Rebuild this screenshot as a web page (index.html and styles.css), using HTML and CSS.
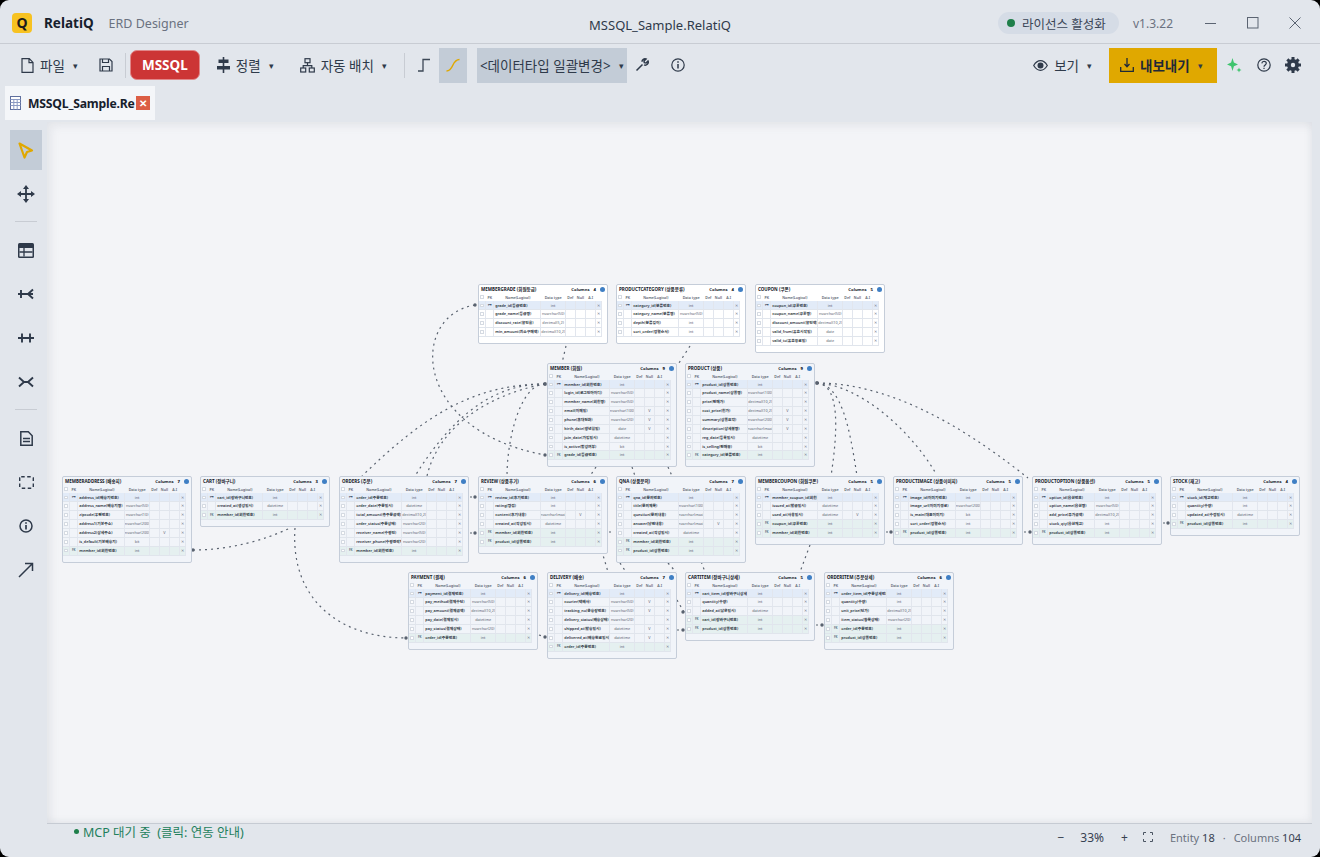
FILE: index.html
```html
<!DOCTYPE html>
<html lang="ko">
<head>
    <meta charset="UTF-8">
    <title>MSSQL_Sample.RelatiQ</title>
    <link rel="stylesheet" href="styles.css">
</head>
<body>
<div class="window">
    <header class="titlebar">
        <div class="logo">Q</div>
        <span class="app-name">RelatiQ</span>
        <span class="app-sub">ERD Designer</span>
        <span class="doc-title">MSSQL_Sample.RelatiQ</span>
        <div class="license"><i class="dot"></i>라이선스 활성화</div>
        <span class="version">v1.3.22</span>
        <div class="win-controls">
            <svg width="12" height="12" viewBox="0 0 12 12"><path d="M0 6.5h11" stroke="#5b6472" fill="none"/></svg>
            <svg width="12" height="12" viewBox="0 0 12 12"><rect x=".5" y=".5" width="10.5" height="10.5" stroke="#5b6472" fill="none"/></svg>
            <svg width="12" height="12" viewBox="0 0 12 12"><path d="M.5.5l11 11M11.5.5l-11 11" stroke="#5b6472" fill="none"/></svg>
        </div>
    </header>

    <nav class="toolbar">
        <button class="tool file-btn">
            <svg width="13" height="15" viewBox="0 0 13 15" class="ic"><path d="M1 .7h7.3L12 4.4v9.9H1zM8 .7v4h4"/></svg>
            파일 <b class="caret">▾</b>
        </button>
        <button class="tool save-btn">
            <svg width="14" height="14" viewBox="0 0 14 14" class="ic"><path d="M1 1h9.5L13 3.500V13H1zM3.500 1v3.500h6V1M3.500 13V8.500h7V13"/></svg>
        </button>
        <i class="tb-sep sep-db"></i>
        <button class="db-btn">MSSQL</button>
        <button class="tool align-btn">
            <svg width="13" height="16" viewBox="0 0 13 16"><path d="M6.500 0v16" stroke="#2f3a4a" stroke-width="1.600"/><rect x="1.500" y="2.500" width="10" height="3.500" fill="#2f3a4a"/><rect y="9" width="13" height="3.500" fill="#2f3a4a"/></svg>
            정렬 <b class="caret">▾</b>
        </button>
        <button class="tool layout-btn">
            <svg width="15" height="15" viewBox="0 0 15 15" class="ic"><rect x="5" y=".7" width="5" height="4"/><rect x=".7" y="10" width="5" height="4"/><rect x="9.300" y="10" width="5" height="4"/><path d="M7.500 4.700v3M3.200 10V7.700h8.600V10"/></svg>
            자동 배치 <b class="caret">▾</b>
        </button>
        <i class="tb-sep sep-line"></i>
        <button class="icon-btn ortho-btn">
            <svg width="14" height="14" viewBox="0 0 14 14"><path d="M1 13h5V1.500h7" fill="none" stroke="#3d4856" stroke-width="1.300"/></svg>
        </button>
        <button class="icon-btn curve-btn">
            <svg width="14" height="14" viewBox="0 0 14 14"><path d="M.5 13C8 13 5.500 1.500 13.500 1.500" fill="none" stroke="#e0a800" stroke-width="1.300"/></svg>
        </button>
        <div class="type-select">&lt;데이터타입 일괄변경&gt;<b class="caret">▾</b></div>
        <button class="icon-btn wrench-btn">
            <svg width="14" height="14" viewBox="0 0 14 14"><path d="M1.500 12.500l6-6M7 3.800A3 3 0 0 1 11 1l-2 2 .3 1.700 1.700.3 2-2a3 3 0 0 1-4 3.900" fill="none" stroke="#2f3a4a" stroke-width="1.500"/></svg>
        </button>
        <button class="icon-btn info-btn">
            <svg width="14" height="14" viewBox="0 0 14 14" class="ic"><circle cx="7" cy="7" r="6.200"/><path d="M7 6v4.500M7 3.300v1.400" stroke-width="1.500"/></svg>
        </button>
        <button class="tool view-btn">
            <svg width="15" height="11" viewBox="0 0 15 11" class="ic"><path d="M.7 5.500C3 1.700 5.200.7 7.500.7s4.500 1 6.800 4.800C12 9.300 9.800 10.300 7.500 10.300S3 9.300.7 5.500z"/><circle cx="7.500" cy="5.500" r="2.400" fill="#2f3a4a"/></svg>
            보기 <b class="caret">▾</b>
        </button>
        <button class="export-btn">
            <svg width="14" height="14" viewBox="0 0 14 14" fill="none" stroke="#1f2937" stroke-width="1.300"><path d="M7 0v8.500M4.500 6L7 8.800 9.500 6M.7 9v4.300h12.600V9"/></svg>
            내보내기 <b class="caret">▾</b>
        </button>
        <button class="icon-btn spark-btn">
            <svg width="15" height="15" viewBox="0 0 15 15" fill="#3ec46d"><path d="M5.500 0l1.400 4.600L11 6.500 6.900 8.300 5.500 13 4.100 8.300 0 6.500l4.100-1.900zM12 9.500l.7 1.800 1.800.7-1.800.7L12 14.500l-.7-1.800-1.800-.7 1.800-.7z"/></svg>
        </button>
        <button class="icon-btn help-btn">
            <svg width="14" height="14" viewBox="0 0 14 14" class="ic"><circle cx="7" cy="7" r="6.200"/><path d="M4.800 5.300C5 3.800 6 3.300 7 3.300c1.300 0 2.300.8 2.300 2 0 1.700-2.300 1.700-2.300 3.500M7 9.800v1.300"/></svg>
        </button>
        <button class="icon-btn gear-btn">
            <svg width="16" height="16" viewBox="0 0 16 16"><circle cx="8" cy="8" r="4.700" fill="none" stroke="#2f3a4a" stroke-width="2.600"/><g fill="#2f3a4a"><rect x="6.500" y="0" width="3" height="16"/><rect x="6.500" y="0" width="3" height="16" transform="rotate(45 8 8)"/><rect x="6.500" y="0" width="3" height="16" transform="rotate(90 8 8)"/><rect x="6.500" y="0" width="3" height="16" transform="rotate(135 8 8)"/></g><circle cx="8" cy="8" r="4" fill="#2f3a4a"/><circle cx="8" cy="8" r="2.200" fill="#e2e6ec"/></svg>
        </button>
    </nav>

    <div class="tabbar">
        <div class="tab">
            <svg width="11" height="14" viewBox="0 0 11 14"><rect x=".5" y=".5" width="10" height="13" fill="#fff" stroke="#5f6f9e"/><path d="M.5 3.500h10M.5 6.500h10M.5 9.500h10M3.800 3.500v10M7.200 3.500v10" stroke="#8c9bc4" fill="none"/></svg>
            <span class="tab-name">MSSQL_Sample.Re</span>
            <span class="tab-close">✕</span>
        </div>
    </div>

    <div class="workspace">
        <aside class="sidebar">
            <button class="side-btn active">
                <svg width="16" height="17" viewBox="0 0 16 17"><path d="M1.500 1.500l12.500 7-5 1.500L6.500 15.500z" fill="none" stroke="#e0a800" stroke-width="2.200" stroke-linejoin="round"/></svg>
            </button>
            <button class="side-btn">
                <svg width="18" height="18" viewBox="0 0 18 18" fill="#2f3a4a"><path d="M9 0l3 4H6zM9 18l-3-4h6zM0 9l4-3v6zM18 9l-4 3V6z"/><path d="M9 3v12M3 9h12" stroke="#2f3a4a" stroke-width="1.800"/></svg>
            </button>
            <i class="side-sep"></i>
            <button class="side-btn">
                <svg width="16" height="15" viewBox="0 0 16 15"><rect width="16" height="15" rx="1.500" fill="#2f3a4a"/><path d="M1.500 5h13v8.500h-13z" fill="#e2e6ec"/><path d="M1.500 9h13M6 5v8.500" stroke="#2f3a4a" stroke-width="1.300"/></svg>
            </button>
            <button class="side-btn">
                <svg width="16" height="12" viewBox="0 0 16 12" class="ic2"><path d="M0 6h15M3 2v8M15 1.500L10 6l5 4.500"/></svg>
            </button>
            <button class="side-btn">
                <svg width="16" height="12" viewBox="0 0 16 12" class="ic2"><path d="M0 6h16M4 1.500v9M12 1.500v9"/></svg>
            </button>
            <button class="side-btn">
                <svg width="16" height="12" viewBox="0 0 16 12" class="ic2"><path d="M1 1.500L6 6 1 10.500M15 1.500L10 6l5 4.500M5 6h6"/></svg>
            </button>
            <i class="side-sep"></i>
            <button class="side-btn">
                <svg width="13" height="15" viewBox="0 0 13 15" class="ic2 thin"><path d="M.8.800h7.500l3.900 3.900v9.500H.8zM3 7.500h7M3 10.500h7"/></svg>
            </button>
            <button class="side-btn">
                <svg width="15" height="13" viewBox="0 0 15 13"><rect x=".7" y=".7" width="13.600" height="11.600" rx="1.500" fill="none" stroke="#2f3a4a" stroke-width="1.400" stroke-dasharray="3.500 2.500"/></svg>
            </button>
            <button class="side-btn">
                <svg width="14" height="14" viewBox="0 0 14 14" class="ic2 thin"><circle cx="7" cy="7" r="6"/><path d="M7 6v4.500M7 3.200v1.500" stroke-width="1.700"/></svg>
            </button>
            <button class="side-btn">
                <svg width="16" height="16" viewBox="0 0 16 16" class="ic2 thin"><path d="M1 15L14.500 1.500M7 1.500h7.500V9"/></svg>
            </button>
        </aside>

        <main class="canvas" id="canvas">
            <svg class="links" viewBox="47 122 1265 701">
                <g class="link-lines">
                    <path d="M475 305C410 315 410 430 545 455"/>
                    <path d="M545 384C470 384 420 420 362 476"/>
                    <path d="M545 384C490 384 450 420 415 476"/>
                    <path d="M545 384C500 392 440 420 427 476"/>
                    <path d="M545 384C520 384 507 440 507 476"/>
                    <path d="M193 550C230 550 265 540 290 528"/>
                    <path d="M295 528C290 600 340 638 407 638"/>
                    <path d="M817 383C840 385 838 430 831 476"/>
                    <path d="M817 383C842 385 850 430 857 476"/>
                    <path d="M817 383C860 385 910 430 935 472"/>
                    <path d="M817 383C900 383 980 440 1028 478"/>
                    <path d="M566 346L562 363"/>
                    <path d="M690 346L679 363"/>
                    <path d="M596 467L590 476"/>
                    <path d="M632 467L635 476"/>
                    <path d="M668 467L672 476"/>
                    <path d="M600 545L608 572"/>
                    <path d="M620 563L626 572"/>
                    <path d="M668 563L676 572"/>
                    <path d="M695 545L705 572"/>
                    <path d="M810 545L800 572"/>
                    <path d="M470 497L476 497"/>
                    <path d="M470 533L476 533"/>
                    <path d="M609 532L615 532"/>
                    <path d="M539 635L546 637"/>
                    <path d="M677 630L684 630"/>
                    <path d="M677 600L684 612"/>
                    <path d="M816 625L823 625"/>
                    <path d="M886 532L892 532"/>
                    <path d="M1024 532L1031 532"/>
                    <path d="M1163 523L1169 523"/>
                </g>
                <g class="link-ends">
                    <circle cx="475" cy="305" r="1.700"/>
                    <circle cx="545" cy="384" r="1.900"/>
                    <circle cx="545" cy="455" r="1.700"/>
                    <circle cx="193" cy="550" r="1.700"/>
                    <circle cx="406" cy="638" r="1.700"/>
                    <circle cx="817" cy="383" r="1.900"/>
                    <circle cx="475" cy="497" r="1.700"/>
                    <circle cx="475" cy="533" r="1.700"/>
                    <circle cx="545" cy="637" r="1.700"/>
                    <circle cx="683" cy="630" r="1.700"/>
                    <circle cx="683" cy="612" r="1.700"/>
                    <circle cx="822" cy="625" r="1.700"/>
                    <circle cx="891" cy="532" r="1.700"/>
                    <circle cx="1030" cy="532" r="1.700"/>
                    <circle cx="1168" cy="523" r="1.700"/>
                </g>
            </svg>
        </main>
    </div>

    <footer class="statusbar">
        <span class="mcp"><i class="mcp-dot"></i>MCP 대기 중&nbsp; (클릭: 연동 안내)</span>
        <div class="status-right">
            <span class="zoom-minus">−</span>
            <span class="zoom-val">33%</span>
            <span class="zoom-plus">+</span>
            <svg width="10" height="10" viewBox="0 0 10 10" class="fit"><path d="M.5 3V.5H3M7 .5h2.500V3M9.500 7v2.500H7M3 9.500H.5V7" fill="none" stroke="#4b5563"/></svg>
            <span class="stat">Entity <em>18</em></span>
            <span class="stat-dot">·</span>
            <span class="stat">Columns <em>104</em></span>
        </div>
    </footer>
</div>
<script src="app.js"></script>
</body>
</html>
```

FILE: styles.css
```css
* {
  margin: 0;
  padding: 0;
  box-sizing: border-box;
}

html, body {
  height: 100%;
  overflow: hidden;
  background-color: black;
}

body {
  font-family: "Noto Sans", "Noto Sans CJK KR", sans-serif;
  color: #2f3a4a;
}

button {
  border: none;
  background: none;
  font: inherit;
  color: inherit;
}

.window {
  display: flex;
  flex-direction: column;
  height: 857px;
  background-color: #e2e6ec;
  border-radius: 9px;
  overflow: hidden;
}

/* Title bar */
.titlebar {
  position: relative;
  display: flex;
  align-items: center;
  height: 44px;
  padding: 3px 0 0 12px;
  border-bottom: 1px solid #c8ccd3;
  flex: none;
}

.logo {
  width: 20px;
  height: 20px;
  border-radius: 4px;
  background-color: #f7c221;
  color: #1b1b1b;
  font-weight: 700;
  font-size: 14px;
  line-height: 20px;
  text-align: center;
}

.app-name {
  margin-left: 12px;
  font-size: 13.500px;
  font-weight: 700;
  color: #17202c;
}

.app-sub {
  margin-left: 15px;
  font-size: 12.500px;
  color: #6b7280;
}

.doc-title {
  position: absolute;
  left: 0;
  right: 0;
  top: 16px;
  text-align: center;
  font-size: 13px;
  line-height: 18px;
  color: #2f3a4a;
}

.license {
  display: flex;
  align-items: center;
  gap: 7px;
  margin-left: auto;
  height: 22px;
  padding: 0 9px;
  width: 121px;
  border-radius: 11px;
  background-color: #d5dce6;
  font-size: 12.500px;
  white-space: nowrap;
  color: #3a4556;
}

.dot {
  width: 8px;
  height: 8px;
  border-radius: 50%;
  background-color: #1e7f4a;
}

.version {
  margin-left: 14px;
  font-size: 12px;
  color: #6b7280;
}

.win-controls {
  display: flex;
  gap: 30px;
  margin-left: 32px;
  margin-right: 19px;
}

/* Toolbar */
.toolbar {
  display: flex;
  align-items: center;
  height: 42px;
  flex: none;
  font-size: 13.500px;
}

.ic, .ic2 {
  fill: none;
  stroke: #2f3a4a;
  stroke-width: 1.200;
}

.ic2 {
  stroke-width: 1.900;
}

.ic2.thin {
  stroke-width: 1.500;
}

.tool {
  display: flex;
  align-items: center;
  gap: 6px;
  white-space: nowrap;
}

.caret {
  font-size: 9px;
  font-weight: 400;
  margin-left: 2px;
  color: #2f3a4a;
}

.file-btn { margin-left: 21px; }
.save-btn { margin-left: 21px; }
.align-btn { margin-left: 17px; }
.layout-btn { margin-left: 26px; gap: 6px; }
.view-btn { margin-left: auto; }

.tb-sep {
  width: 1px;
  height: 25px;
  background-color: #c8ccd3;
}

.sep-db { margin-left: 12px; }
.sep-line { margin-left: 17px; }

.db-btn {
  width: 70px;
  height: 30px;
  margin-left: 4px;
  border-radius: 7px;
  background-color: #cc3535;
  border: 1px solid #e0888a;
  color: white;
  font-size: 13.500px;
  font-weight: 700;
}

.icon-btn {
  display: flex;
  align-items: center;
  justify-content: center;
  width: 28px;
  height: 35px;
}

.ortho-btn { margin-left: 5px; }
.curve-btn { margin-left: 1px; background-color: #c3ccd7; }
.wrench-btn { margin-left: 1px; }
.info-btn { margin-left: 8px; }

.type-select {
  display: flex;
  align-items: center;
  justify-content: space-between;
  width: 150px;
  height: 35px;
  margin-left: 10px;
  padding: 0 3px 0 3px;
  background-color: #c3ccd7;
  font-size: 13.500px;
  white-space: nowrap;
}

.export-btn {
  display: flex;
  align-items: center;
  gap: 6px;
  width: 108px;
  height: 35px;
  margin-left: 17px;
  padding-left: 11px;
  background-color: #e0a800;
  color: #1f2937;
  font-weight: 700;
  font-size: 13.500px;
  white-space: nowrap;
}

.spark-btn { margin-left: 3px; }
.help-btn { margin-left: 2px; }
.gear-btn { margin-left: 1px; margin-right: 13px; }

/* Tabs */
.tabbar {
  height: 36px;
  flex: none;
  padding-left: 5px;
}

.tab {
  display: flex;
  align-items: center;
  width: 150px;
  height: 34px;
  padding-left: 5px;
  background-color: #f4f6f9;
}

.tab-name {
  margin-left: 7px;
  font-size: 12.200px;
  font-weight: 700;
  letter-spacing: -0.2px;
  color: #17202c;
  white-space: nowrap;
}

.tab-close {
  width: 14px;
  height: 14px;
  margin-left: auto;
  margin-right: 5px;
  background-color: #dc5e45;
  color: white;
  font-size: 10px;
  font-weight: 700;
  line-height: 14px;
  text-align: center;
}

/* Side tools + canvas */
.workspace {
  display: flex;
  flex: 1;
  min-height: 0;
  padding-right: 8px;
}

.sidebar {
  display: flex;
  flex-direction: column;
  align-items: center;
  width: 47px;
  padding: 8px 0 0 5px;
  flex: none;
}

.side-btn {
  display: flex;
  align-items: center;
  justify-content: center;
  width: 32px;
  height: 40px;
  margin-bottom: 4px;
  flex: none;
}

.side-btn.active {
  background-color: #c3ccd7;
}

.side-sep {
  width: 22px;
  height: 1px;
  margin: 3px 0 8px;
  background-color: #c8ccd3;
  flex: none;
}

.canvas {
  position: relative;
  flex: 1;
  background-color: #f3f4f7;
  box-shadow: inset 4px 4px 8px rgba(120, 130, 145, 0.12), inset -3px -3px 6px rgba(120, 130, 145, 0.08);
  overflow: hidden;
}

.links {
  position: absolute;
  left: 0;
  top: 0;
  width: 100%;
  height: 100%;
}

.link-lines path {
  fill: none;
  stroke: #59626f;
  stroke-width: 1.200;
  stroke-dasharray: 2 4;
}

.link-ends circle {
  fill: #59626f;
}

/* Entity cards, drawn at 33% */
.entity {
  position: absolute;
  width: 130px;
  padding-bottom: 6px;
  background-color: #f1f4f9;
  border: 1px solid #c5cdd9;
  border-radius: 2px;
  line-height: 1;
}

.entity.plain {
  background-color: white;
}

.entity-head {
  display: flex;
  align-items: center;
  height: 9.300px;
  padding: 0 2px 0 2px;
}

.entity-title {
  flex: 1;
  font-size: 4.500px;
  font-weight: 700;
  color: #14181f;
  white-space: nowrap;
}

.entity-count {
  font-size: 4.200px;
  font-weight: 700;
  color: #14181f;
  white-space: nowrap;
}

.entity-count b {
  margin-left: 4px;
  margin-right: 4px;
}

.entity-info {
  width: 5px;
  height: 5px;
  border-radius: 50%;
  background-color: #3f7fc4;
}

.col-row {
  display: grid;
  grid-template-columns: 7.300px 8px 47px 24.700px 9.800px 10.200px 10.300px 5.400px;
  width: 122.700px;
  height: 8.870px;
  align-items: stretch;
  font-size: 3.800px;
  color: #5b6472;
}

.col-head {
  height: 7.200px;
  font-size: 3.600px;
  font-weight: 600;
  color: #5b6472;
}

.col-row > span {
  display: flex;
  align-items: center;
  justify-content: center;
  border-bottom: 0.5px solid #e0e5ec;
  border-right: 0.5px solid #e2e6ee;
  white-space: nowrap;
  overflow: hidden;
}

.col-head > span {
  border-color: transparent;
}

.col-row > .cell-name {
  justify-content: flex-start;
  padding-left: 1px;
  font-weight: 600;
  color: #2b3340;
}

.col-head > .cell-name {
  justify-content: center;
  color: #5b6472;
}

.is-pk {
  background-color: #e2ebf8;
}

.is-fk {
  background-color: #e5f0f0;
}

.check {
  width: 3.800px;
  height: 3.800px;
  background-color: white;
  border: 0.5px solid #d5dae2;
  border-radius: 0.5px;
}

.pk-mark {
  font-size: 4px;
  color: #26324a;
  font-family: "DejaVu Sans", sans-serif;
}

.fk-mark {
  font-size: 3px;
  font-weight: 700;
  color: #64748b;
}

.col-row > .cell-x {
  font-size: 3.800px;
  color: #7a8290;
}

/* Status bar */
.statusbar {
  display: flex;
  align-items: center;
  justify-content: space-between;
  height: 34px;
  flex: none;
  padding: 0 11px 7px 27px;
  border-top: 1px solid #c6cbd3;
  margin-right: 8px;
  margin-left: 47px;
  font-size: 11px;
}

.mcp {
  display: flex;
  align-items: center;
  margin-bottom: 12px;
  font-size: 12.500px;
  color: #1e7f5c;
  white-space: pre;
}

.mcp-dot {
  width: 5px;
  height: 5px;
  margin-right: 4px;
  border-radius: 50%;
  background-color: #1e7f4a;
}

.status-right {
  display: flex;
  align-items: center;
  color: #374151;
}

.zoom-minus, .zoom-val, .zoom-plus {
  font-size: 12px;
}

.zoom-val { margin-left: 16px; }
.zoom-plus { margin-left: 17px; }
.fit { margin-left: 15px; }

.stat {
  color: #6b7280;
}

.fit + .stat {
  margin-left: 17px;
}

.stat em {
  font-style: normal;
  color: #374151;
}

.stat-dot {
  margin: 0 8px;
  color: #6b7280;
}
```

FILE: app.js
```js
// left/top are canvas coordinates at 33% zoom
const entities = [
    { name: "MEMBERGRADE (회원등급)", x: 431, y: 162, plain: true, cols: [
        ["grade_id(등급번호)", "int", "", "P"],
        ["grade_name(등급명)", "nvarchar(50)"],
        ["discount_rate(할인율)", "decimal(5,2)"],
        ["min_amount(최소구매액)", "decimal(10,2)"] ] },
    { name: "PRODUCTCATEGORY (상품분류)", x: 569, y: 162, plain: true, cols: [
        ["category_id(분류번호)", "int", "", "P"],
        ["category_name(분류명)", "nvarchar(50)"],
        ["depth(분류깊이)", "int"],
        ["sort_order(정렬순서)", "int"] ] },
    { name: "COUPON (쿠폰)", x: 708, y: 162, plain: true, cols: [
        ["coupon_id(쿠폰번호)", "int", "", "P"],
        ["coupon_name(쿠폰명)", "nvarchar(50)"],
        ["discount_amount(할인액)", "decimal(10,2)"],
        ["valid_from(유효시작일)", "date"],
        ["valid_to(유효종료일)", "date"] ] },
    { name: "MEMBER (회원)", x: 500, y: 241, cols: [
        ["member_id(회원번호)", "int", "", "P"],
        ["login_id(로그인아이디)", "nvarchar(50)"],
        ["member_name(회원명)", "nvarchar(50)"],
        ["email(이메일)", "nvarchar(100)", "V"],
        ["phone(휴대전화)", "nvarchar(20)", "V"],
        ["birth_date(생년월일)", "date", "V"],
        ["join_date(가입일시)", "datetime"],
        ["is_active(활성여부)", "bit"],
        ["grade_id(등급번호)", "int", "", "F"] ] },
    { name: "PRODUCT (상품)", x: 638, y: 241, cols: [
        ["product_id(상품번호)", "int", "", "P"],
        ["product_name(상품명)", "nvarchar(100)"],
        ["price(판매가)", "decimal(10,2)"],
        ["cost_price(원가)", "decimal(10,2)", "V"],
        ["summary(상품요약)", "nvarchar(200)", "V"],
        ["description(상세설명)", "nvarchar(max)", "V"],
        ["reg_date(등록일시)", "datetime"],
        ["is_selling(판매중)", "bit"],
        ["category_id(분류번호)", "int", "", "F"] ] },
    { name: "MEMBERADDRESS (배송지)", x: 15, y: 354, cols: [
        ["address_id(배송지번호)", "int", "", "P"],
        ["address_name(배송지명)", "nvarchar(50)"],
        ["zipcode(우편번호)", "nvarchar(10)"],
        ["address1(기본주소)", "nvarchar(200)"],
        ["address2(상세주소)", "nvarchar(200)", "V"],
        ["is_default(기본배송지)", "bit"],
        ["member_id(회원번호)", "int", "", "F"] ] },
    { name: "CART (장바구니)", x: 153, y: 354, cols: [
        ["cart_id(장바구니번호)", "int", "", "P"],
        ["created_at(생성일시)", "datetime"],
        ["member_id(회원번호)", "int", "", "F"] ] },
    { name: "ORDERS (주문)", x: 292, y: 354, cols: [
        ["order_id(주문번호)", "int", "", "P"],
        ["order_date(주문일시)", "datetime"],
        ["total_amount(총주문금액)", "decimal(10,2)"],
        ["order_status(주문상태)", "nvarchar(20)"],
        ["receiver_name(수령인)", "nvarchar(50)"],
        ["receiver_phone(수령연락처)", "nvarchar(20)"],
        ["member_id(회원번호)", "int", "", "F"] ] },
    { name: "REVIEW (상품후기)", x: 431, y: 354, cols: [
        ["review_id(후기번호)", "int", "", "P"],
        ["rating(평점)", "int"],
        ["content(후기내용)", "nvarchar(max)", "V"],
        ["created_at(작성일시)", "datetime"],
        ["member_id(회원번호)", "int", "", "F"],
        ["product_id(상품번호)", "int", "", "F"] ] },
    { name: "QNA (상품문의)", x: 569, y: 354, cols: [
        ["qna_id(문의번호)", "int", "", "P"],
        ["title(문의제목)", "nvarchar(100)"],
        ["question(문의내용)", "nvarchar(max)"],
        ["answer(답변내용)", "nvarchar(max)", "V"],
        ["created_at(작성일시)", "datetime"],
        ["member_id(회원번호)", "int", "", "F"],
        ["product_id(상품번호)", "int", "", "F"] ] },
    { name: "MEMBERCOUPON (회원쿠폰)", x: 708, y: 354, cols: [
        ["member_coupon_id(회원쿠폰번호)", "int", "", "P"],
        ["issued_at(발급일시)", "datetime"],
        ["used_at(사용일시)", "datetime", "V"],
        ["coupon_id(쿠폰번호)", "int", "", "F"],
        ["member_id(회원번호)", "int", "", "F"] ] },
    { name: "PRODUCTIMAGE (상품이미지)", x: 846, y: 354, cols: [
        ["image_id(이미지번호)", "int", "", "P"],
        ["image_url(이미지경로)", "nvarchar(200)"],
        ["is_main(대표이미지)", "bit"],
        ["sort_order(정렬순서)", "int"],
        ["product_id(상품번호)", "int", "", "F"] ] },
    { name: "PRODUCTOPTION (상품옵션)", x: 985, y: 354, cols: [
        ["option_id(옵션번호)", "int", "", "P"],
        ["option_name(옵션명)", "nvarchar(50)"],
        ["add_price(추가금액)", "decimal(10,2)"],
        ["stock_qty(옵션재고)", "int"],
        ["product_id(상품번호)", "int", "", "F"] ] },
    { name: "STOCK (재고)", x: 1123, y: 354, cols: [
        ["stock_id(재고번호)", "int", "", "P"],
        ["quantity(수량)", "int"],
        ["updated_at(수정일시)", "datetime"],
        ["product_id(상품번호)", "int", "", "F"] ] },
    { name: "PAYMENT (결제)", x: 361, y: 450, cols: [
        ["payment_id(결제번호)", "int", "", "P"],
        ["pay_method(결제수단)", "nvarchar(50)"],
        ["pay_amount(결제금액)", "decimal(10,2)"],
        ["pay_date(결제일시)", "datetime"],
        ["pay_status(결제상태)", "nvarchar(20)"],
        ["order_id(주문번호)", "int", "", "F"] ] },
    { name: "DELIVERY (배송)", x: 500, y: 450, cols: [
        ["delivery_id(배송번호)", "int", "", "P"],
        ["courier(택배사)", "nvarchar(50)", "V"],
        ["tracking_no(운송장번호)", "nvarchar(50)", "V"],
        ["delivery_status(배송상태)", "nvarchar(20)"],
        ["shipped_at(발송일시)", "datetime", "V"],
        ["delivered_at(배송완료일시)", "datetime", "V"],
        ["order_id(주문번호)", "int", "", "F"] ] },
    { name: "CARTITEM (장바구니상세)", x: 638, y: 450, cols: [
        ["cart_item_id(장바구니상세번호)", "int", "", "P"],
        ["quantity(수량)", "int"],
        ["added_at(담은일시)", "datetime"],
        ["cart_id(장바구니번호)", "int", "", "F"],
        ["product_id(상품번호)", "int", "", "F"] ] },
    { name: "ORDERITEM (주문상세)", x: 777, y: 450, cols: [
        ["order_item_id(주문상세번호)", "int", "", "P"],
        ["quantity(수량)", "int"],
        ["unit_price(단가)", "decimal(10,2)"],
        ["item_status(항목상태)", "nvarchar(20)"],
        ["order_id(주문번호)", "int", "", "F"],
        ["product_id(상품번호)", "int", "", "F"] ] }
];

const canvas = document.getElementById("canvas");

function colRow(col) {
    const [name, type, nullable = "", key = ""] = col;
    const cls = key === "P" ? " is-pk" : key === "F" ? " is-fk" : "";
    const mark = key === "P" ? '<b class="pk-mark">⊶</b>' : key === "F" ? '<b class="fk-mark">FK</b>' : "";
    return `<div class="col-row${cls}">
        <span><i class="check"></i></span><span>${mark}</span>
        <span class="cell-name">${name}</span><span>${type}</span>
        <span></span><span>${nullable}</span><span></span><span class="cell-x">✕</span>
    </div>`;
}

entities.forEach((ent) => {
    const box = document.createElement("div");
    box.className = ent.plain ? "entity plain" : "entity";
    box.style.left = ent.x + "px";
    box.style.top = ent.y + "px";
    box.innerHTML = `<div class="entity-head">
            <span class="entity-title">${ent.name}</span>
            <span class="entity-count">Columns<b>${ent.cols.length}</b></span>
            <i class="entity-info"></i>
        </div>
        <div class="col-row col-head">
            <span><i class="check"></i></span><span>PK</span>
            <span class="cell-name">Name(Logical)</span><span>Data type</span>
            <span>Def</span><span>Null</span><span>A.I</span><span></span>
        </div>` + ent.cols.map(colRow).join("");
    canvas.appendChild(box);
});
```
